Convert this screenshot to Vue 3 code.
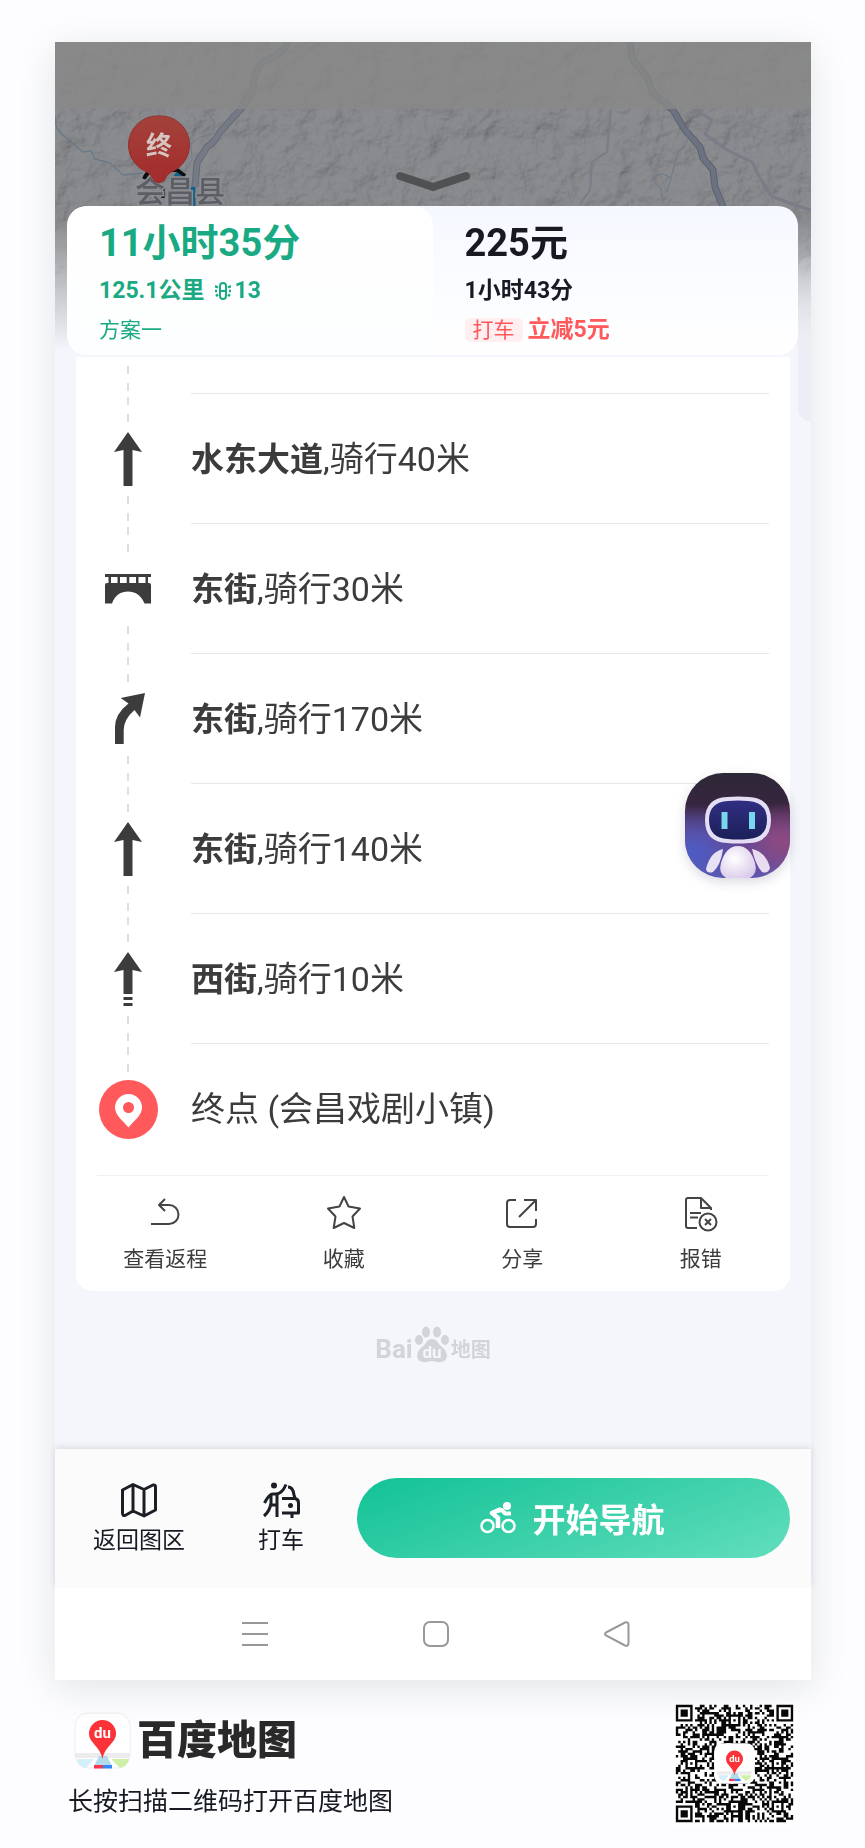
<template>
  <div class="page">
    <main class="phone">
      <section class="hero">
        <svg class="map" viewBox="0 0 756 308" preserveAspectRatio="xMidYMin slice" aria-hidden="true">
          <defs>
            <filter id="relief" x="0" y="0" width="100%" height="100%">
              <feTurbulence type="fractalNoise" baseFrequency="0.035 0.035" numOctaves="5" seed="8" result="noise" />
              <feDiffuseLighting in="noise" lighting-color="#fff" surfaceScale="12" diffuseConstant="1">
                <feDistantLight azimuth="225" elevation="58" />
              </feDiffuseLighting>
            </filter>
            <linearGradient id="fade" x1="0" y1="0" x2="0" y2="1">
              <stop offset="0.58" stop-color="#f4f6fb" stop-opacity="0" />
              <stop offset="0.8" stop-color="#f4f6fb" stop-opacity="0.55" />
              <stop offset="1" stop-color="#f4f6fb" />
            </linearGradient>
            <linearGradient id="pin" x1="0" y1="0" x2="0" y2="1">
              <stop offset="0" stop-color="#a3423a" />
              <stop offset="1" stop-color="#a32b2c" />
            </linearGradient>
          </defs>
          <rect width="756" height="308" fill="#8a8c90" />
          <rect width="756" height="308" filter="url(#relief)" opacity="0.24" class="relief" />
          <g fill="none" stroke-linejoin="round">
            <path d="M233 0Q228 13 207 20Q198 32 198 48L185 68L165 90Q160 100 152 105L142 121L140 145" stroke="#666a76" stroke-width="7" />
            <path d="M233 0Q228 13 207 20Q198 32 198 48L185 68L165 90Q160 100 152 105L142 121L140 145" stroke="#767a86" stroke-width="5" />
            <path d="M575 0L577 16L592 35L598 51L618 68L630 88L645 105L648 116L658 128L660 145L668 165" stroke="#5b6170" stroke-width="7" />
            <path d="M575 0L577 16L592 35L598 51L618 68L630 88L645 105L648 116L658 128L660 145L668 165" stroke="#6c7280" stroke-width="5" />
            <path d="M0 75Q0 88 8 93L22 105L28 110L36 109L40 117L55 121L68 133L88 131" stroke="#6c7a88" stroke-width="1.5" />
            <path d="M150 68L160 80L158 92L145 95L136 102L137 118L130 130" stroke="#717d89" stroke-width="1" />
            <path d="M634 80L632 100L622 112L616 136L612 150M616 136L608 132L600 134L599 140L606 146L607 156" stroke="#6c7a88" stroke-width="1" />
            <path d="M640 68L657 78L650 92L672 108L697 120L704 134L716 154L737 162L756 168" stroke="#7a7d87" stroke-width="3" />
            <path d="M556 68L552 110L537 120L535 148L525 162" stroke="#7a7d87" stroke-width="2" />
          </g>
          <rect width="756" height="67" fill="#888887" opacity="0.8" />
          <path d="M89 137q3-7 9-9h24l8 6" fill="none" stroke="#0b0d10" stroke-width="4" />
          <path d="M120 132l10 7M138 145v20" stroke="#126188" stroke-width="5" />
          <path d="M108 144v12" stroke="#111418" stroke-width="3" />
          <text x="125" y="160" class="town">会昌县</text>
          <path d="M104 74a29 29 0 0 1 12 56q-5 3-7 9l-5 2-5-2q-2-6-7-9a29 29 0 0 1 12-56z" fill="url(#pin)" stroke="#93302d" />
          <text x="104" y="113" class="pin-text">终</text>
          <rect width="756" height="308" fill="url(#fade)" />
        </svg>
        <div class="hero-content">
          <button class="collapse" aria-label="收起">
            <svg width="76" height="22" viewBox="0 0 76 22">
              <path d="M5 5 38 16 71 5" fill="none" stroke="#505152" stroke-width="8" stroke-linecap="round" stroke-linejoin="round" />
            </svg>
          </button>
          <div class="plans">
            <div class="plan plan-active">
              <h2>11小时35分</h2>
              <p class="plan-info">
                <span>125.1公里</span>
                <svg width="16" height="18" viewBox="0 0 16 18" fill="none" stroke="#1aaa83">
                  <rect x="5" y="1" width="6" height="16" rx="3" stroke-width="2" />
                  <path d="M5 9h6" stroke-width="2" />
                  <path d="M0 4l3 1.500M0 9h2M1 14l2-1.500M16 4l-3 1.500M16 9h-2M15 14l-2-1.500" stroke-width="2.500" />
                </svg>
                <span>13</span>
              </p>
              <p class="plan-name">方案一</p>
            </div>
            <div class="plan">
              <h2>225元</h2>
              <p class="plan-info">1小时43分</p>
              <p class="plan-deal"><span class="tag">打车</span><b>立减5元</b></p>
            </div>
          </div>
        </div>
      </section>

      <section class="route">
        <div class="row-cut"><i class="dashes"></i></div>
        <ol class="steps">
          <li v-for="(step, i) in steps" :key="i" class="step">
            <div class="rail">
              <i class="dashes"></i>
              <svg v-if="step.icon === 'straight'" width="28" height="54" viewBox="0 0 28 54" fill="#3c3c3c">
                <path d="M14 0 28 20 18.5 18V54H9.5V18L0 20Z" />
              </svg>
              <svg v-else-if="step.icon === 'bridge'" width="46" height="30" viewBox="0 0 46 30" fill="#3c3c3c">
                <path d="M0 0H46V3H43V10H40.500V3H33.500V10H31V3H24.300V10H21.700V3H15V10H12.500V3H6V10H3.500V3H0Z" />
                <path d="M2 9H44q2 0 2 2V29.500H39.500C36 21 30 17.500 23 17.500S10 21 7 29.500H0V11q0-2 2-2z" />
              </svg>
              <svg v-else-if="step.icon === 'right'" width="34" height="54" viewBox="0 -1 34 54" fill="#3c3c3c">
                <path d="M34 0 29 24.500 23.500 17Q13 26 12.700 37V51H4V34Q4 21 17.500 10.500L9.700 5Z" />
              </svg>
              <svg v-else-if="step.icon === 'ahead'" width="28" height="54" viewBox="0 0 28 54" fill="#3c3c3c">
                <path d="M14 0 28 20 18.500 18V42H9.500V18L0 20Z" />
                <path d="M9.500 45h9v3h-9zM9.500 51h9v3h-9z" />
              </svg>
              <svg v-else width="59" height="59" viewBox="0 0 59 59">
                <circle cx="29.500" cy="29.500" r="29.500" fill="#ff595c" />
                <path d="M29.500 14a13.500 13.500 0 0 1 13.500 13.500c0 8-8 13-13.500 20-5.500-7-13.500-12-13.500-20A13.500 13.500 0 0 1 29.500 14z" fill="#fff" />
                <circle cx="29.500" cy="27.500" r="5.500" fill="#ff595c" />
              </svg>
              <i class="dashes" :class="{ hidden: step.icon === 'end' }"></i>
            </div>
            <p class="step-text"><b v-if="step.road">{{ step.road }}</b>{{ step.text }}</p>
          </li>
        </ol>
        <div class="actions">
          <button class="action">
            <svg width="36" height="36" viewBox="0 0 36 36">
              <path d="M4 30H22a9.500 9.500 0 0 0 0-19H12M18 5 12 11 18 17" />
            </svg>
            查看返程
          </button>
          <button class="action">
            <svg width="36" height="36" viewBox="0 0 36 36">
              <path d="M18 3 22.500 12.500 34 14.500 26.500 22.500 28.300 34 18 29 7.700 34 9.500 22.500 2 14.500 13.500 12.500Z" />
            </svg>
            收藏
          </button>
          <button class="action">
            <svg width="36" height="36" viewBox="0 0 36 36">
              <path d="M12 6H6q-3 0-3 3V30q0 3 3 3H29q3 0 3-3V25M20 6H32V17M32 6 15 23" />
            </svg>
            分享
          </button>
          <button class="action">
            <svg width="36" height="36" viewBox="0 0 36 36">
              <path d="M14 34H5q-2 0-2-2V6q0-2 2-2H18L28 14V16M18 4V14H28M7 19H18M7 23.500H15" />
              <circle cx="25" cy="28" r="8.500" />
              <path d="M22 25 28 31M28 25 22 31" />
            </svg>
            报错
          </button>
        </div>
      </section>

      <div class="brand">
        <span class="brand-latin">Bai</span>
        <svg width="36" height="38" viewBox="0 0 36 38" fill="#d2d4d9">
          <ellipse cx="5" cy="15" rx="4" ry="5" />
          <ellipse cx="12" cy="7" rx="4" ry="5.500" />
          <ellipse cx="23" cy="7" rx="4" ry="5.500" />
          <ellipse cx="31" cy="15" rx="4" ry="5" />
          <path d="M18 14c5 0 6 5 11 9s6 13-2 14c-4 1-6-1-9-1s-5 2-9 1c-8-1-7-10-2-14s6-9 11-9z" />
          <text x="18" y="33" class="paw-text">du</text>
        </svg>
        <span class="brand-cjk">地图</span>
      </div>

      <div class="bottom-bar">
        <button class="tool">
          <svg width="38" height="38" viewBox="0 0 38 38">
            <path d="M2.500 9 13 3.500 24 8.500 33 4Q35.500 3.500 35.500 6V29L24 35 13 30 5 34.500Q2.500 35 2.500 32ZM13 3.500V30M24 8.500V35" />
          </svg>
          返回图区
        </button>
        <button class="tool">
          <svg width="38" height="38" viewBox="0 0 38 38">
            <circle cx="12" cy="4.500" r="3" fill="#1b1e26" stroke="none" />
            <path d="M24 3.500Q20 13 14 13H11Q7 13 2.500 22M9 13V22Q8 30 2 35M15 13V36M9 24H15" />
            <path d="M26 6Q31 6 32 14L33 17M20 17.500H33Q36.500 18 36.500 22V32H20M30 32V37" />
            <circle cx="28.500" cy="24.500" r="2.500" fill="#1b1e26" stroke="none" />
          </svg>
          打车
        </button>
        <button class="start">
          <svg width="36" height="32" viewBox="0 0 36 32" fill="none" stroke="#fff">
            <circle cx="7.500" cy="24" r="6" stroke-width="2.500" />
            <circle cx="28.500" cy="24" r="6" stroke-width="2.500" />
            <circle cx="27" cy="4" r="4" fill="#fff" stroke="none" />
            <path d="M21 7 12 11 18 16V26" stroke-width="4.500" stroke-linejoin="round" />
            <path d="M17 9 22 8 25 11.500H31" stroke-width="4" stroke-linejoin="round" />
          </svg>
          开始导航
        </button>
      </div>

      <nav class="system-nav">
        <button aria-label="菜单">
          <svg width="26" height="26" viewBox="0 0 26 26"><path d="M0 2H26M0 13H26M0 24H26" /></svg>
        </button>
        <button aria-label="主页">
          <svg width="26" height="26" viewBox="0 0 26 26"><rect x="1" y="1" width="24" height="24" rx="6" /></svg>
        </button>
        <button aria-label="返回">
          <svg width="26" height="26" viewBox="0 0 26 26">
            <path d="M2 11.500 21 1.500Q24.500 0.500 24.500 4V22Q24.500 25.500 21 24.500L2 14.500Q0 13 2 11.500Z" />
          </svg>
        </button>
      </nav>

      <i class="side-tab"></i>
      <button class="robot" aria-label="智能助手">
        <svg width="105" height="105" viewBox="0 0 105 105">
          <defs>
            <linearGradient id="sky" x1="0" y1="0" x2="0" y2="1">
              <stop offset="0" stop-color="#2c2836" />
              <stop offset="0.3" stop-color="#37253f" />
              <stop offset="0.6" stop-color="#69448c" />
              <stop offset="1" stop-color="#5d57ad" />
            </linearGradient>
            <radialGradient id="blue" cx="0.08" cy="0.75" r="0.45">
              <stop offset="0" stop-color="#4d5cc4" />
              <stop offset="1" stop-color="#4d5cc4" stop-opacity="0" />
            </radialGradient>
            <radialGradient id="rose" cx="0.92" cy="0.65" r="0.38">
              <stop offset="0" stop-color="#8f4a80" />
              <stop offset="1" stop-color="#8f4a80" stop-opacity="0" />
            </radialGradient>
            <linearGradient id="face" x1="0" y1="0" x2="0" y2="1">
              <stop offset="0" stop-color="#312f83" />
              <stop offset="1" stop-color="#1b1f58" />
            </linearGradient>
            <radialGradient id="body" cx="0.4" cy="0.4" r="0.7">
              <stop offset="0" stop-color="#fff" />
              <stop offset="1" stop-color="#d9c9ea" />
            </radialGradient>
          </defs>
          <rect width="105" height="105" fill="url(#sky)" />
          <rect width="105" height="105" fill="url(#blue)" />
          <rect width="105" height="105" fill="url(#rose)" />
          <path d="M42 24Q53 23 64 24Q86 25 86 47Q86 69 64 70Q53 71 42 70Q20 69 20 47Q20 25 42 24Z" fill="#e4def4" />
          <path d="M43 28Q53 27 63 28Q82 29 82 47Q82 65 63 66Q53 67 43 66Q24 65 24 47Q24 29 43 28Z" fill="url(#face)" />
          <path d="M36.500 39h6v17h-6zM64 39h6v17h-6z" fill="#76d7ef" />
          <path d="M38 76Q25 79 21 96Q22 101 28 99Q36 92 38 76Z" fill="#e6e1f5" />
          <path d="M67 76Q81 79 85 95Q83 101 77 99Q70 91 67 76Z" fill="#e9dcf0" />
          <path d="M53 73Q65 73 70 90Q73 100 65 105H41Q33 100 36 90Q41 73 53 73Z" fill="url(#body)" />
        </svg>
      </button>
    </main>

    <footer class="footer">
      <div class="about">
        <div class="about-brand">
          <svg class="app-icon" width="57" height="57" viewBox="0 0 57 57">
            <rect x="1" y="1" width="55" height="55" rx="13" fill="#fff" stroke="#eceef1" />
            <path d="M1 41H56V46H1Z" fill="#ececec" />
            <path d="M3 47H20L12 56Q4 55 3 47Z" fill="#d2effa" />
            <path d="M37 47H55Q54 54 46 56Z" fill="#cdf0a6" />
            <path d="M25 44H33L38 54H20Z" fill="#b2dcec" />
            <path d="M20 53H29V56.500H20Z" fill="#f5344f" />
            <path d="M29 53H38V56.500H29Z" fill="#3488f5" />
            <path d="M28.500 8A13.500 13.500 0 0 1 42 21.500C42 31 31 34 28.500 47C26 34 15 31 15 21.500A13.500 13.500 0 0 1 28.500 8Z" fill="#fb3338" />
            <text x="28.500" y="26" class="icon-text">du</text>
          </svg>
          <strong>百度地图</strong>
        </div>
        <p>长按扫描二维码打开百度地图</p>
      </div>
      <svg class="qr" width="125" height="125" viewBox="-1.600 -1.600 52.200 52.200" role="img" aria-label="二维码">
        <rect x="-1.600" y="-1.600" width="52.200" height="52.200" fill="#fff" />
        <path :d="qrPath" fill="#080808" />
        <rect x="16" y="16" width="17" height="17" rx="3.500" fill="#fff" />
        <g transform="translate(17 17) scale(0.263)">
          <path d="M1 41H56V46H1Z" fill="#ececec" />
          <path d="M3 47H20L12 56Q4 55 3 47Z" fill="#d2effa" />
          <path d="M37 47H55Q54 54 46 56Z" fill="#cdf0a6" />
          <path d="M25 44H33L38 54H20Z" fill="#b2dcec" />
          <path d="M20 53H29V56.500H20Z" fill="#f5344f" />
          <path d="M29 53H38V56.500H29Z" fill="#3488f5" />
          <path d="M28.500 8A13.500 13.500 0 0 1 42 21.500C42 31 31 34 28.500 47C26 34 15 31 15 21.500A13.500 13.500 0 0 1 28.500 8Z" fill="#fb3338" />
          <text x="28.500" y="26" class="icon-text">du</text>
        </g>
      </svg>
    </footer>
  </div>
</template>

<script setup>
import { ref, computed } from 'vue';

const steps = ref([
  { icon: 'straight', road: '水东大道', text: ',骑行40米' },
  { icon: 'bridge', road: '东街', text: ',骑行30米' },
  { icon: 'right', road: '东街', text: ',骑行170米' },
  { icon: 'straight', road: '东街', text: ',骑行140米' },
  { icon: 'ahead', road: '西街', text: ',骑行10米' },
  { icon: 'end', road: '', text: '终点 (会昌戏剧小镇)' }
]);

const QR_SIZE = 49;

// ring pattern around a centre: 3 = finder, 2 = alignment
const ring = (x, y, cx, cy, r) => {
  const d = Math.max(Math.abs(x - cx), Math.abs(y - cy));
  if (d > r + (r === 3 ? 1 : 0)) return null;
  return r === 3 ? d === 3 || d < 2 : d !== 1;
};

const qrPath = computed(() => {
  const centres = [
    [3, 3, 3], [45, 3, 3], [3, 45, 3],
    [24, 6, 2], [6, 24, 2], [42, 24, 2], [24, 42, 2], [42, 42, 2]
  ];
  let seed = 20241;
  let d = '';
  for (let y = 0; y < QR_SIZE; y++) {
    for (let x = 0; x < QR_SIZE; x++) {
      seed = (seed * 1103515245 + 12345) % 2147483648;
      let on = seed / 2147483648 > 0.5;
      for (const [cx, cy, r] of centres) {
        const hit = ring(x, y, cx, cy, r);
        if (hit !== null) on = hit;
      }
      if (on) d += `M${x} ${y}h1v1h-1z`;
    }
  }
  return d;
});
</script>

<style>
body { background: #fdfdff; }
</style>

<style scoped>
.page { padding: 42px 54px 22px 55px; font-family: Roboto, "Noto Sans CJK SC", sans-serif; color: #3c3c3c; }
.page * { box-sizing: border-box; }
button { border: none; background: none; padding: 0; font-family: inherit; color: inherit; cursor: pointer; }
p, h2, ol { margin: 0; padding: 0; list-style: none; }
svg { display: block; flex: none; }

.phone { position: relative; background: #f4f6fb; box-shadow: 0 8px 36px rgba(60, 75, 85, 0.14); }

.hero { display: grid; }
.map, .hero-content { grid-area: 1 / 1; }
.map { width: 100%; height: 308px; }
.relief { mix-blend-mode: multiply; }
.town { font-size: 30px; font-weight: 500; text-anchor: middle; fill: #5b5e65; stroke: #8c8d90; stroke-width: 3px; paint-order: stroke; }
.pin-text { font-size: 26px; font-weight: 700; text-anchor: middle; fill: #d6c6c2; }
.hero-content { padding: 129px 13px 0 12px; z-index: 1; }
.collapse { display: block; margin: 0 auto 13px; }
.plans { display: grid; grid-template-columns: 1fr 1fr; height: 149px; border-radius: 20px; overflow: hidden; background: linear-gradient(#f5f8ff, #fff); }
.plan { padding: 13px 32px 0; color: #171a23; }
.plan-active { background: linear-gradient(#fff, #fdfeff); border-top-right-radius: 20px; color: #1aaa83; }
.plan h2 { font-size: 38px; line-height: 48px; font-weight: 700; }
.plan-info { display: flex; align-items: center; font-size: 23px; line-height: 28px; margin-top: 10px; font-weight: 700; }
.plan-info svg { margin: 0 3px 0 11px; }
.plan-name { font-size: 21px; line-height: 24px; margin-top: 13px; }
.plan-deal { display: flex; align-items: center; gap: 5px; margin-top: 13px; font-size: 23px; line-height: 24px; color: #ff595c; }
.tag { padding: 0 8px; border-radius: 5px; background: #ffeff0; font-size: 21px; }

.route { margin: 2px 21px 0; background: #fff; border-radius: 0 0 16px 16px; }
.row-cut { height: 36px; padding: 9px 51px 0; }
.dashes { display: block; width: 2px; height: 25px; flex: none; background: repeating-linear-gradient(#dedede 0 8px, transparent 8px 17px); }
.hidden { visibility: hidden; }
.steps { padding-bottom: 2px; }
.step { display: flex; height: 130px; padding: 0 21px; }
.rail { display: flex; flex-direction: column; align-items: center; justify-content: space-between; width: 62px; margin-right: 32px; padding: 4px 0 2px; }
.step-text { flex: 1; border-top: 1px solid #e8e8e8; font-size: 34px; line-height: 130px; color: #3c3c3c; }
.step-text b { font-size: 33px; }
.actions { display: grid; grid-template-columns: repeat(4, 1fr); padding: 0 0 16px; background: linear-gradient(#f0f0f0, #f0f0f0) no-repeat 21px 0 / calc(100% - 42px) 1px; }
.action { display: flex; flex-direction: column; align-items: center; gap: 13px; padding-top: 19px; font-size: 21px; line-height: 32px; color: #3c3c3c; }
.action svg { overflow: visible; fill: none; stroke: #444; stroke-width: 2; stroke-linejoin: round; }

.brand { display: flex; justify-content: center; align-items: flex-end; gap: 1px; padding: 34px 0 86px; font-weight: 700; color: #d2d4d9; }
.brand-latin { font-size: 26px; line-height: 28px; }
.brand-cjk { font-size: 20px; line-height: 26px; }
.paw-text { font-size: 17px; font-weight: 700; text-anchor: middle; fill: #f4f6fb; }

.bottom-bar { display: flex; align-items: center; height: 139px; padding: 0 21px 2px 38px; background: #fbfbfb; box-shadow: 0 -2px 6px rgba(40, 45, 60, 0.12); }
.tool { display: flex; flex-direction: column; align-items: center; gap: 6px; padding-top: 2px; margin-right: 73px; font-size: 23px; line-height: 32px; color: #171a23; }
.tool + .tool { margin-right: 53px; }
.tool svg { fill: none; stroke: #1b1e26; stroke-width: 3; stroke-linejoin: round; }
.start { display: flex; flex: 1; align-items: center; justify-content: center; gap: 17px; height: 80px; padding-right: 3px; border-radius: 40px; background: linear-gradient(160deg, #12c296, #3ed1ab 55%, #62debe); font-size: 33px; font-weight: 700; color: #fff; }

.system-nav { display: flex; justify-content: center; align-items: center; gap: 155px; height: 92px; padding-left: 6px; background: #fff; }
.system-nav svg { fill: none; stroke: #989898; stroke-width: 2; }

.side-tab { position: absolute; top: 215px; right: 0; width: 13px; height: 164px; border-radius: 12px 0 0 12px; background: linear-gradient(rgba(236, 237, 245, 0.15), #edeef5 60%); }
.robot { position: absolute; top: 731px; right: 21px; border-radius: 38px; overflow: hidden; box-shadow: 0 4px 12px rgba(50, 40, 90, 0.18); }

.footer { display: flex; justify-content: space-between; align-items: flex-start; padding: 21px 14px 0 13px; }
.about-brand { display: flex; align-items: center; gap: 6px; padding: 11px 0 0 6px; }
.about-brand strong { font-size: 40px; line-height: 57px; font-weight: 900; color: #292929; }
.about p { margin-top: 15px; font-size: 25px; line-height: 36px; color: #171a23; }
.icon-text { font-size: 15px; font-weight: 700; text-anchor: middle; fill: #fff; }
</style>
